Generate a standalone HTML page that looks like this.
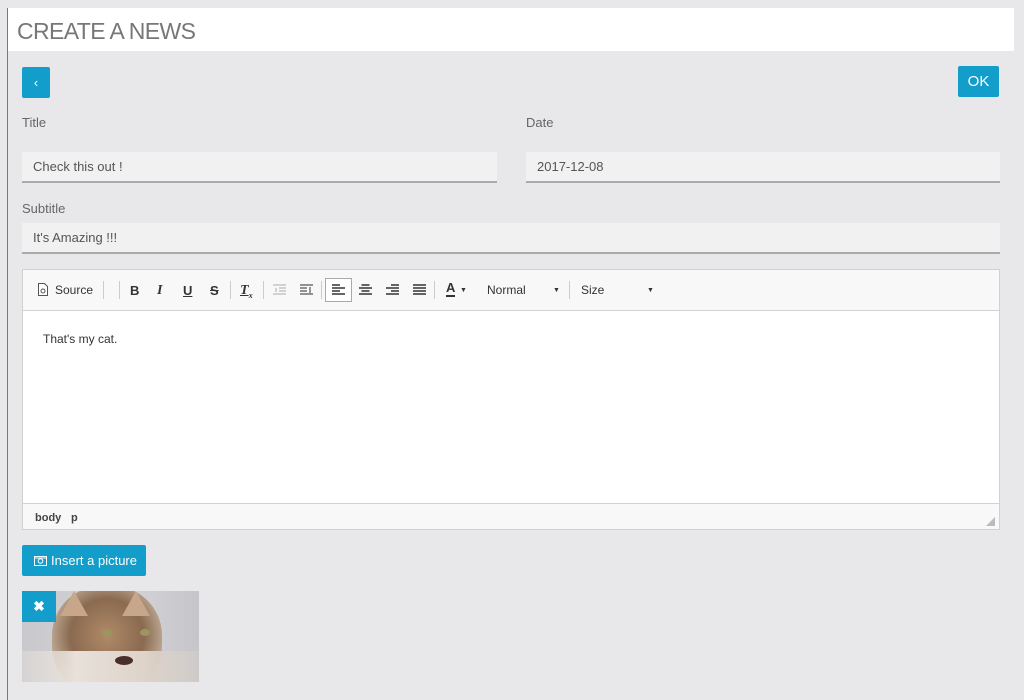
<!DOCTYPE html>
<html><head><meta charset="utf-8"><style>
*{box-sizing:border-box;margin:0;padding:0}
body{width:1024px;height:700px;background:#e8e8ea;font-family:"Liberation Sans",sans-serif;position:relative;overflow:hidden;color:#555}
.vline{position:absolute;left:7px;top:8px;width:1px;height:692px;background:#777}
.hdr{position:absolute;left:8px;top:8px;width:1006px;height:43px;background:#fff}
.hdr h1{font-size:23px;color:#777;position:absolute;left:9px;top:10px;letter-spacing:-0.6px;font-weight:normal}
.btn{position:absolute;background:#139dcb;color:#fff;border-radius:2px;display:flex;align-items:center;justify-content:center}
.lbl{position:absolute;font-size:13px;color:#666}
.inp{position:absolute;background:#f1f1f2;border-bottom:2px solid #aaa;font-size:13px;color:#555;padding-left:11px;display:flex;align-items:center}
.ed{position:absolute;left:22px;top:269px;width:978px;height:261px;border:1px solid #d1d1d1;background:#fff}
.tb{height:41px;background:#f8f8f8;border-bottom:1px solid #d1d1d1;position:relative;font-size:12px;color:#333}
.tb span{position:absolute;top:13px}
.sep{position:absolute;top:11px;width:1px;height:18px;background:#ccc}
.foot{position:absolute;left:0;bottom:0;width:100%;height:26px;background:#f8f8f8;border-top:1px solid #d1d1d1;font-size:11px;font-weight:bold;color:#444}
</style></head><body>
<div class="vline"></div>
<div class="hdr"><h1>CREATE A NEWS</h1></div>
<div class="btn" style="left:22px;top:67px;width:28px;height:31px;font-size:13px">&lsaquo;</div>
<div class="btn" style="left:958px;top:66px;width:41px;height:31px;font-size:15px">OK</div>
<div class="lbl" style="left:22px;top:115px">Title</div>
<div class="lbl" style="left:526px;top:115px">Date</div>
<div class="inp" style="left:22px;top:152px;width:475px;height:31px">Check this out !</div>
<div class="inp" style="left:526px;top:152px;width:474px;height:31px">2017-12-08</div>
<div class="lbl" style="left:22px;top:201px">Subtitle</div>
<div class="inp" style="left:22px;top:223px;width:978px;height:31px">It's Amazing !!!</div>
<div class="ed">
 <div class="tb">
  <svg style="position:absolute;left:15px;top:13px" width="10" height="13" viewBox="0 0 10 13"><path d="M0.5 .5h6l3 3v9h-9z" fill="#fff" stroke="#555"/><circle cx="5" cy="8" r="2" fill="none" stroke="#555"/></svg>
  <span style="left:32px">Source</span>
  <div class="sep" style="left:80px"></div><div class="sep" style="left:96px"></div>
  <span style="left:107px;font-weight:bold;font-size:13px">B</span>
  <span style="left:134px;font-style:italic;font-weight:bold;font-family:'Liberation Serif';font-size:14px">I</span>
  <span style="left:160px;text-decoration:underline;font-weight:bold;font-size:13px">U</span>
  <span style="left:187px;text-decoration:line-through;font-weight:bold;font-size:13px">S</span>
  <div class="sep" style="left:207px"></div>
  <span style="left:217px;font-style:italic;font-weight:bold;font-family:'Liberation Serif';font-size:14px;text-decoration:underline">T<sub style="font-size:8px">x</sub></span>
  <div class="sep" style="left:240px"></div>
  <svg style="position:absolute;left:250px;top:14px" width="13" height="12"><path d="M0 1h13M6 4h7M6 7h7M0 10h13M3 4v4" stroke="#bbb" stroke-width="1.2"/></svg>
  <svg style="position:absolute;left:277px;top:14px" width="13" height="12"><path d="M0 1h13M0 4h7M0 7h7M0 10h13M10 3v6" stroke="#555" stroke-width="1.2"/></svg>
  <div class="sep" style="left:298px"></div>
  <div style="position:absolute;left:302px;top:8px;width:27px;height:24px;border:1px solid #aaa;background:#fff"></div>
  <svg style="position:absolute;left:309px;top:14px" width="13" height="12"><path d="M0 1h8M0 4h13M0 7h8M0 10h13" stroke="#333" stroke-width="1.6"/></svg>
  <svg style="position:absolute;left:336px;top:14px" width="13" height="12"><path d="M2.5 1h8M0 4h13M2.5 7h8M0 10h13" stroke="#333" stroke-width="1.6"/></svg>
  <svg style="position:absolute;left:363px;top:14px" width="13" height="12"><path d="M5 1h8M0 4h13M5 7h8M0 10h13" stroke="#333" stroke-width="1.6"/></svg>
  <svg style="position:absolute;left:390px;top:14px" width="13" height="12"><path d="M0 1h13M0 4h13M0 7h13M0 10h13" stroke="#333" stroke-width="1.6"/></svg>
  <div class="sep" style="left:411px"></div>
  <span style="left:423px;font-weight:bold;font-size:13px;top:11px;border-bottom:2px solid #333;line-height:14px">A</span>
  <span style="left:437px;font-size:7px;top:17px">▼</span>
  <span style="left:464px">Normal</span><span style="left:530px;font-size:7px;top:17px">▼</span>
  <div class="sep" style="left:546px"></div>
  <span style="left:558px">Size</span><span style="left:624px;font-size:7px;top:17px">▼</span>
 </div>
 <div style="position:absolute;left:20px;top:62px;font-size:12px;color:#333">That's my cat.</div>
 <div class="foot"><span style="position:absolute;left:12px;top:8px">body</span><span style="position:absolute;left:48px;top:8px">p</span>
 <svg style="position:absolute;right:4px;bottom:3px" width="9" height="9"><path d="M9 0L9 9L0 9z" fill="#bbb"/></svg></div>
</div>
<div class="btn" style="left:22px;top:545px;width:124px;height:31px;font-size:13px;justify-content:flex-start;padding-left:12px">
<svg width="13" height="11" style="margin-right:4px"><rect x=".5" y="1.5" width="12" height="9" fill="none" stroke="#fff"/><circle cx="6.5" cy="6" r="2.3" fill="none" stroke="#fff"/><path d="M1 3h11" stroke="#fff"/></svg>Insert a picture</div>
<div style="position:absolute;left:22px;top:591px;width:177px;height:91px;background:linear-gradient(90deg,#c9c9cd,#d4d4d8 60%,#c6c6ca);overflow:hidden">
 <div style="position:absolute;left:30px;top:-5px;width:110px;height:110px;border-radius:45%;background:radial-gradient(circle at 50% 45%,#b08a68,#8a6a50 45%,#c7b4a0 75%,rgba(220,210,200,0) 90%)"></div>
 <div style="position:absolute;left:38px;top:0;width:0;height:0;border-left:14px solid transparent;border-right:14px solid transparent;border-bottom:25px solid #c8a68a"></div>
 <div style="position:absolute;left:100px;top:0;width:0;height:0;border-left:14px solid transparent;border-right:14px solid transparent;border-bottom:25px solid #c8a68a"></div>
 <div style="position:absolute;left:0;top:60px;width:177px;height:31px;background:linear-gradient(90deg,rgba(230,225,220,.4),#e8e1da 30%,#ddd3c9 70%,rgba(210,205,200,.6))"></div>
 <div style="position:absolute;left:80px;top:38px;width:10px;height:7px;border-radius:50%;background:#9a9660"></div>
 <div style="position:absolute;left:118px;top:38px;width:10px;height:7px;border-radius:50%;background:#9a9660"></div>
 <div style="position:absolute;left:93px;top:65px;width:18px;height:9px;border-radius:50%;background:#4a2e2a"></div>
</div>
<div class="btn" style="left:22px;top:591px;width:34px;height:31px;font-size:14px;font-weight:bold;border-radius:0">✖</div>
</body></html>
